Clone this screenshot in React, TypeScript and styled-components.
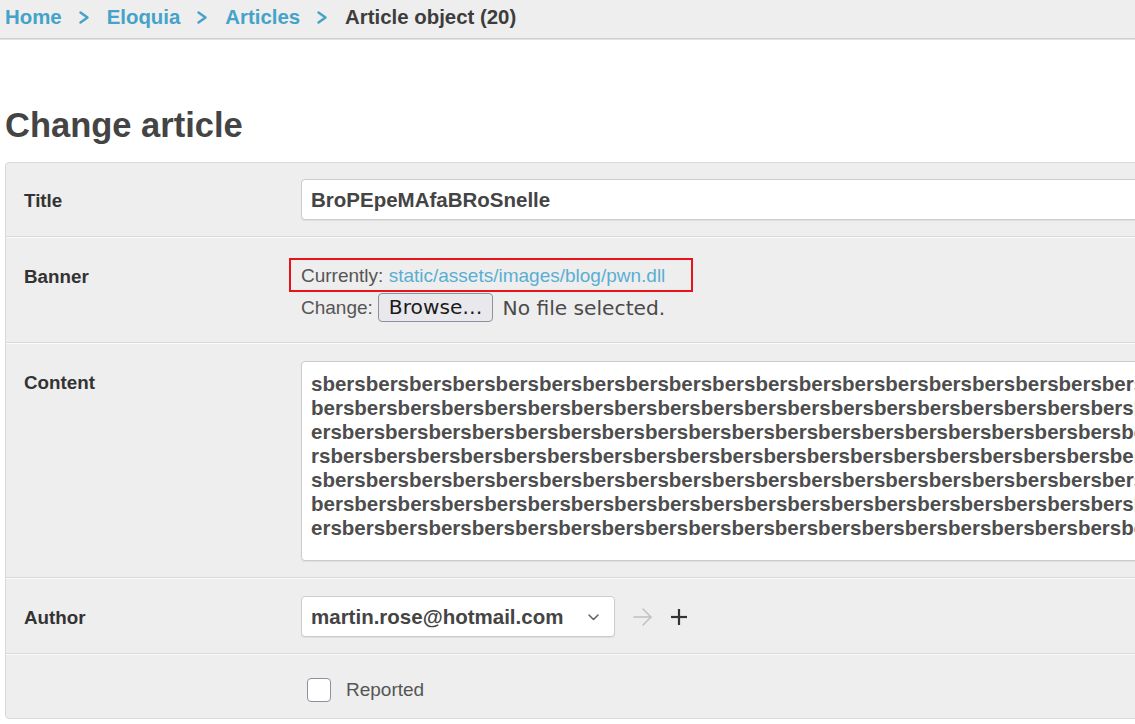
import React from "react";
import styled, { createGlobalStyle } from "styled-components";

const GlobalStyle = createGlobalStyle`
  html, body {
    margin: 0;
    padding: 0;
    background: #ffffff;
    overflow: hidden;
  }
  body {
    font-family: "Liberation Sans", Arial, sans-serif;
    color: #333;
  }
  * { box-sizing: border-box; }
`;

const Breadcrumbs = styled.nav`
  display: flex;
  align-items: center;
  height: 39px;
  padding: 6px 5px 10px;
  background: #eeeeee;
  border-bottom: 1px solid #cfcfcf;
  box-shadow: 0 1px 0 #e2e2e2;
  font-size: 20.4px;
  font-weight: bold;
  line-height: 22px;
`;

const Crumb = styled.a`
  color: #45a2c9;
  text-decoration: none;
`;

const CurrentCrumb = styled.span`
  color: #3d3d3d;
`;

const Sep = styled.span`
  display: inline-flex;
  align-items: center;
  margin: 0 18px 0 17px;
`;

const Main = styled.main`
  padding-left: 5px;
`;

const Heading = styled.h1`
  margin: 66px 0 17px;
  font-size: 34.5px;
  line-height: 40px;
  font-weight: bold;
  color: #444;
`;

const Fieldset = styled.div`
  width: 1400px;
  background: #eeeeee;
  border: 1px solid #d9d9d9;
  border-radius: 4px;
`;

const Row = styled.div<{ $last?: boolean }>`
  display: flex;
  align-items: flex-start;
  padding: 17px 0 ${(p) => (p.$last ? "11px" : "16px")} 18px;
  border-top: 1px solid #fbfbfb;
  border-bottom: ${(p) => (p.$last ? "none" : "1px solid #d9d9d9")};
  &:first-child {
    padding-top: 16px;
    border-top: none;
  }
`;

const Label = styled.label`
  flex: 0 0 277px;
  padding-top: 10px;
  font-size: 18.8px;
  line-height: 24px;
  font-weight: bold;
  color: #333;
`;

const Field = styled.div`
  flex: 1;
  min-width: 0;
`;

const TextInput = styled.input`
  display: block;
  width: 1000px;
  height: 41px;
  padding: 0 10px 0 9px;
  border: 1px solid #cccccc;
  border-radius: 4px;
  background: #fff;
  box-shadow: 0 1px 1px rgba(0, 0, 0, 0.07);
  font-family: "Liberation Sans", Arial, sans-serif;
  font-size: 20.5px;
  font-weight: bold;
  color: #444;
  outline: none;
`;

const FileBlock = styled.div`
  padding-bottom: 3px;
  font-size: 19px;
  color: #555;
`;

const CurrentLine = styled.div`
  position: relative;
  padding-top: 5px;
  line-height: 32px;
`;

const Annotation = styled.span`
  position: absolute;
  left: -12px;
  top: 3px;
  width: 404px;
  height: 34px;
  border: 2px solid #e8141c;
  pointer-events: none;
`;

const FileLink = styled.a`
  color: #5aaed2;
  text-decoration: none;
`;

const ChangeLine = styled.div`
  display: flex;
  align-items: center;
  height: 31px;
`;

const BrowseButton = styled.button`
  height: 29px;
  margin-left: 5px;
  padding: 0 9px 0 10px;
  border: 1px solid #8f8f9d;
  border-radius: 4px;
  background: #e9e9ed;
  font-family: "DejaVu Sans", sans-serif;
  font-size: 20.2px;
  color: #1b1b1b;
  line-height: 27px;
`;

const NoFile = styled.span`
  margin-left: 10px;
  font-family: "DejaVu Sans", sans-serif;
  font-size: 20.2px;
  color: #4a4a4a;
`;

const TextArea = styled.textarea`
  display: block;
  width: 1000px;
  height: 200px;
  padding: 10px 10px 7px 9px;
  border: 1px solid #cccccc;
  border-radius: 4px;
  background: #fff;
  box-shadow: 0 1px 1px rgba(0, 0, 0, 0.07);
  font-family: "Liberation Sans", Arial, sans-serif;
  font-size: 20.5px;
  font-weight: bold;
  line-height: 24px;
  color: #4d4d4d;
  white-space: pre;
  overflow: hidden;
  resize: none;
  outline: none;
`;

const RelatedWrap = styled.div`
  display: flex;
  align-items: center;
`;

const SelectWrap = styled.div`
  position: relative;
  width: 314px;
  height: 41px;
`;

const Select = styled.select`
  width: 100%;
  height: 100%;
  padding: 0 30px 0 9px;
  appearance: none;
  -webkit-appearance: none;
  border: 1px solid #cccccc;
  border-radius: 4px;
  background: #fff;
  box-shadow: 0 1px 1px rgba(0, 0, 0, 0.07);
  font-family: "Liberation Sans", Arial, sans-serif;
  font-size: 20.5px;
  font-weight: bold;
  color: #444;
  outline: none;
`;

const Chevron = styled.svg`
  position: absolute;
  right: 16px;
  top: 18px;
  pointer-events: none;
`;

const RelatedIcon = styled.svg<{ $gap: number }>`
  display: block;
  flex: none;
  margin-left: ${(p) => p.$gap}px;
`;

const CheckRow = styled.div`
  display: flex;
  align-items: center;
  height: 34px;
  margin-top: 1px;
  padding-left: 6px;
`;

const CheckBox = styled.span`
  display: inline-block;
  width: 24px;
  height: 24px;
  border: 1.5px solid #8f8f9d;
  border-radius: 4px;
  background: #fff;
`;

const CheckLabel = styled.span`
  margin-left: 15px;
  font-size: 19px;
  color: #555;
`;

const prefixes = ["s", "", "ers", "rs", "s", "", "ers"];
const content = prefixes.map((p) => p + "bers".repeat(30)).join("\n");

function Separator() {
  return (
    <Sep>
      <svg width="10" height="13" viewBox="0 0 10 13">
        <polyline points="1.5,1.5 8.5,6.5 1.5,11.5" fill="none" stroke="#45a2c9" strokeWidth="2.4" strokeLinecap="round" strokeLinejoin="round" />
      </svg>
    </Sep>
  );
}

export default function App() {
  return (
    <>
      <GlobalStyle />
      <Breadcrumbs>
        <Crumb href="#">Home</Crumb>
        <Separator />
        <Crumb href="#">Eloquia</Crumb>
        <Separator />
        <Crumb href="#">Articles</Crumb>
        <Separator />
        <CurrentCrumb>Article object (20)</CurrentCrumb>
      </Breadcrumbs>
      <Main>
        <Heading>Change article</Heading>
        <Fieldset>
          <Row>
            <Label>Title</Label>
            <Field>
              <TextInput defaultValue="BroPEpeMAfaBRoSnelle" />
            </Field>
          </Row>
          <Row>
            <Label>Banner</Label>
            <Field>
              <FileBlock>
                <CurrentLine>
                  Currently: <FileLink href="#">static/assets/images/blog/pwn.dll</FileLink>
                  <Annotation />
                </CurrentLine>
                <ChangeLine>
                  Change:
                  <BrowseButton type="button">Browse…</BrowseButton>
                  <NoFile>No file selected.</NoFile>
                </ChangeLine>
              </FileBlock>
            </Field>
          </Row>
          <Row>
            <Label>Content</Label>
            <Field>
              <TextArea defaultValue={content} wrap="off" spellCheck={false} />
            </Field>
          </Row>
          <Row>
            <Label>Author</Label>
            <Field>
              <RelatedWrap>
                <SelectWrap>
                  <Select defaultValue="m">
                    <option value="m">martin.rose@hotmail.com</option>
                  </Select>
                  <Chevron width="11" height="7" viewBox="0 0 11 7">
                    <polyline points="1,1 5.5,5.5 10,1" fill="none" stroke="#666" strokeWidth="1.6" strokeLinecap="round" strokeLinejoin="round" />
                  </Chevron>
                </SelectWrap>
                <RelatedIcon $gap={18} width="20" height="20" viewBox="0 0 20 20">
                  <g fill="none" stroke="#c0c0c0" strokeWidth="1.5" strokeLinecap="round" strokeLinejoin="round">
                    <line x1="1" y1="10" x2="18" y2="10" />
                    <polyline points="10,2 18,10 10,18" />
                  </g>
                </RelatedIcon>
                <RelatedIcon $gap={17} width="18" height="18" viewBox="0 0 18 18">
                  <g stroke="#333" strokeWidth="2.2" strokeLinecap="butt">
                    <line x1="9" y1="1" x2="9" y2="17" />
                    <line x1="1" y1="9" x2="17" y2="9" />
                  </g>
                </RelatedIcon>
              </RelatedWrap>
            </Field>
          </Row>
          <Row $last>
            <Label />
            <Field>
              <CheckRow>
                <CheckBox />
                <CheckLabel>Reported</CheckLabel>
              </CheckRow>
            </Field>
          </Row>
        </Fieldset>
      </Main>
    </>
  );
}
